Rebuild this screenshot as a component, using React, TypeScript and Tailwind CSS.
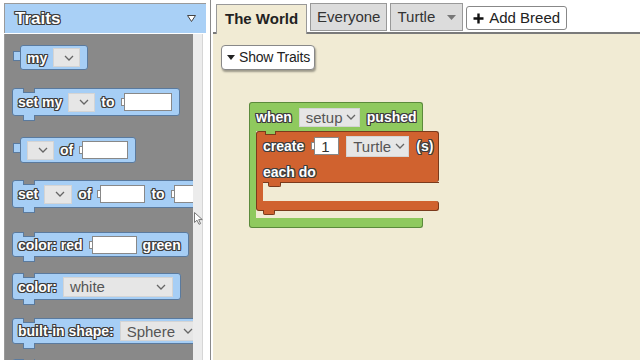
import type { ReactNode } from "react";

const OUT =
  "[text-shadow:-1px_-1px_0_#3d3d3d,1px_-1px_0_#3d3d3d,-1px_1px_0_#3d3d3d,1px_1px_0_#3d3d3d,0_1px_0_#3d3d3d,0_-1px_0_#3d3d3d,1px_0_0_#3d3d3d,-1px_0_0_#3d3d3d]";

function Label({ children }: { children: ReactNode }) {
  return (
    <span className={`whitespace-nowrap text-[14px] font-bold leading-none text-white ${OUT}`}>
      {children}
    </span>
  );
}

function Chevron() {
  return (
    <svg width="10" height="6" viewBox="0 0 10 6" className="shrink-0">
      <path d="M1 1 L5 5 L9 1" fill="none" stroke="#666" strokeWidth="1.3" />
    </svg>
  );
}

function Drop({ label, w, h = 19 }: { label?: string; w: number; h?: number }) {
  return (
    <span
      className="flex shrink-0 items-center justify-between gap-1 border border-[#d4d4d4] bg-[#e6e6e6] px-[6px] text-[15px] leading-none text-[#555]"
      style={{ width: w, height: h }}
    >
      <span className="whitespace-nowrap">{label}</span>
      <Chevron />
    </span>
  );
}

function Slot({ w, value }: { w: number; value?: string }) {
  return (
    <span className="flex shrink-0 items-center">
      <span className="h-[8px] w-[4px] border-y border-l border-[#888] bg-white" />
      <span
        className="-ml-px flex h-[18px] items-center border border-[#888] bg-white px-[6px] text-[15px] leading-none text-[#333]"
        style={{ width: w }}
      >
        {value}
      </span>
    </span>
  );
}

function Reporter({ children, mt, h = 25 }: { children: ReactNode; mt: number; h?: number }) {
  return (
    <div className="relative ml-[8px] flex" style={{ marginTop: mt }}>
      <span className="mt-[6px] h-[10px] w-[8px] shrink-0 border-y border-l border-[#5a7a9e] bg-[#a6cef5]" />
      <div
        className="-ml-px flex shrink-0 items-center gap-[6px] rounded-[3px] border border-[#5a7a9e] bg-[#a6cef5] pl-[6px] pr-[7px]"
        style={{ height: h }}
      >
        {children}
      </div>
    </div>
  );
}

function Statement({ children, mt, h = 28 }: { children?: ReactNode; mt: number; h?: number }) {
  return (
    <div className="relative ml-[7px] flex" style={{ marginTop: mt }}>
      <div
        className="relative flex shrink-0 items-center gap-[6px] rounded-[3px] border border-[#5a7a9e] bg-[#a6cef5] pl-[5px] pr-[7px]"
        style={{ height: h }}
      >
        <span className="absolute -top-px left-[10px] h-[5px] w-[12px] border-x border-b border-[#5a7a9e] bg-[#898989]" />
        <span className="absolute -bottom-[6px] left-[10px] h-[6px] w-[12px] border-x border-b border-[#5a7a9e] bg-[#a6cef5]" />
        {children}
      </div>
    </div>
  );
}

function Flyout() {
  return (
    <div className="flex h-full w-[206px] shrink-0 flex-col pl-[4px] pt-[3px]">
      <div className="flex h-[30px] shrink-0 items-center justify-between border-l border-t border-[#9a9a9a] bg-[#a9d0f6] pl-[10px] pr-[10px]">
        <span className={`text-[17px] font-bold text-white ${OUT}`}>Traits</span>
        <svg width="9" height="7" viewBox="0 0 9 7">
          <path d="M0.5 0.5 H8.5 L4.5 6.5 Z" fill="#fff" stroke="#444" strokeWidth="1" />
        </svg>
      </div>
      <div className="h-[1px] shrink-0 bg-white" />
      <div className="flex min-h-0 flex-1">
        <div className="flex w-[189px] shrink-0 flex-col overflow-hidden border-l border-[#9a9a9a] bg-[#898989]">
          <Reporter mt={11}>
            <Label>my</Label>
            <Drop w={27} />
          </Reporter>
          <Statement mt={18}>
            <Label>set my</Label>
            <Drop w={27} />
            <Label>to</Label>
            <Slot w={48} />
          </Statement>
          <Reporter mt={21} h={26}>
            <Drop w={27} />
            <Label>of</Label>
            <Slot w={46} />
          </Reporter>
          <Statement mt={17}>
            <Label>set</Label>
            <Drop w={28} />
            <Label>of</Label>
            <Slot w={45} />
            <Label>to</Label>
            <Slot w={40} />
          </Statement>
          <Statement mt={24} h={25}>
            <Label>color: red</Label>
            <Slot w={45} />
            <Label>green</Label>
          </Statement>
          <Statement mt={16} h={27}>
            <Label>color:</Label>
            <Drop label="white" w={110} h={20} />
          </Statement>
          <Statement mt={18} h={26}>
            <Label>built-in shape:</Label>
            <Drop label="Sphere" w={80} h={20} />
          </Statement>
          <Statement mt={15} h={26} />
        </div>
        <div className="w-[10px] shrink-0 border-r border-[#d6d6d6] bg-[#ececec]" />
      </div>
    </div>
  );
}

function Tab({ children, active }: { children: ReactNode; active?: boolean }) {
  if (active)
    return (
      <div className="relative -mb-[2px] flex h-[30px] items-center border border-b-0 border-[#999] bg-[#f1ebd4] px-[8px] text-[15px] font-bold text-[#222]">
        {children}
      </div>
    );
  return (
    <div className="mb-[1px] flex h-[28px] items-center border border-[#999] bg-[#dcdcdc] px-[6px] text-[15px] text-[#333]">
      {children}
    </div>
  );
}

function Script() {
  const green = "bg-[#8fc95e]";
  return (
    <div className="ml-[36px] mt-[32px] flex flex-col">
      <div className={`flex h-[29px] w-[174px] items-center gap-[7px] rounded-t-[3px] border border-b-0 border-[#5b8a3b] pl-[6px] ${green}`}>
        <Label>when</Label>
        <Drop label="setup" w={61} h={19} />
        <Label>pushed</Label>
      </div>
      <div className="flex">
        <div className={`w-[7px] shrink-0 border-l border-[#5b8a3b] ${green}`} />
        <div className="relative flex flex-col">
          <span className={`absolute left-[9px] top-0 z-10 h-[4px] w-[11px] border-x border-b border-[#7a3a1c] ${green}`} />
          <div className="flex h-[51px] w-[183px] flex-col justify-center gap-[8px] rounded-[3px] rounded-bl-none border border-b-0 border-[#7a3a1c] bg-[#d0622f] pl-[6px]">
            <div className="flex items-center gap-[7px]">
              <Label>create</Label>
              <Slot w={25} value="1" />
              <Drop label="Turtle" w={63} h={21} />
              <Label>(s)</Label>
            </div>
            <Label>each do</Label>
          </div>
          <div className="flex h-[19px]">
            <div className="w-[7px] border-l border-[#7a3a1c] bg-[#d0622f]" />
            <div className="relative flex-1 border-t border-[#7a3a1c]">
              <span className="absolute -top-px left-[5px] h-[5px] w-[13px] rounded-b-[2px] border-x border-b border-[#7a3a1c] bg-[#d0622f]" />
            </div>
          </div>
          <div className="relative h-[10px] w-[183px] rounded-[3px] rounded-tl-none border border-t-0 border-[#7a3a1c] bg-[#d0622f]">
            <span className="absolute -bottom-[5px] left-[6px] h-[5px] w-[12px] rounded-b-[2px] border-x border-b border-[#7a3a1c] bg-[#d0622f]" />
          </div>
          <div className="h-[7px]" />
        </div>
      </div>
      <div className={`h-[10px] w-[174px] rounded-b-[3px] border border-t-0 border-[#5b8a3b] ${green}`} />
    </div>
  );
}

export default function App() {
  return (
    <div className="relative flex h-[360px] w-[640px] overflow-hidden bg-white font-['Liberation_Sans',Arial,sans-serif]">
      <Flyout />
      <div className="ml-[4px] flex min-w-0 flex-1 flex-col border-l border-[#8a8a8a] pl-[2px]">
        <div className="flex h-[34px] shrink-0 items-end gap-[3px] border-b-2 border-[#7a7a7a] pl-[3px]">
          <Tab active>The World</Tab>
          <Tab>Everyone</Tab>
          <Tab>
            <span className="mr-[12px]">Turtle</span>
            <svg width="9" height="5" viewBox="0 0 9 5">
              <path d="M0 0 H9 L4.5 5 Z" fill="#777" />
            </svg>
          </Tab>
          <div className="mb-[2px] flex h-[24px] items-center gap-[5px] rounded-[3px] border border-[#888] bg-white px-[6px] text-[15px] text-[#222]">
            <svg width="11" height="11" viewBox="0 0 11 11">
              <path d="M5.5 0.5 V10.5 M0.5 5.5 H10.5" stroke="#111" strokeWidth="2.4" />
            </svg>
            Add Breed
          </div>
        </div>
        <div className="flex flex-1 flex-col bg-[#f1ebd4]">
          <div className="ml-[8px] mt-[11px] flex h-[25px] w-fit items-center gap-[4px] whitespace-nowrap rounded-[4px] border border-[#888] bg-white pl-[5px] pr-[4px] text-[14px] tracking-[-0.2px] text-[#222] shadow-[1px_2px_2px_rgba(0,0,0,0.35)]">
            <svg width="8" height="5" viewBox="0 0 8 5">
              <path d="M0 0 H8 L4 5 Z" fill="#222" />
            </svg>
            Show Traits
          </div>
          <Script />
        </div>
      </div>
      <svg className="absolute left-[194px] top-[212px]" width="9" height="13" viewBox="0 0 9 13">
        <path d="M0.5 0.5 V10.5 L3 8.2 L5 12.3 L6.6 11.6 L4.7 7.6 H8.3 Z" fill="#fff" stroke="#777" strokeWidth="1" />
      </svg>
    </div>
  );
}
